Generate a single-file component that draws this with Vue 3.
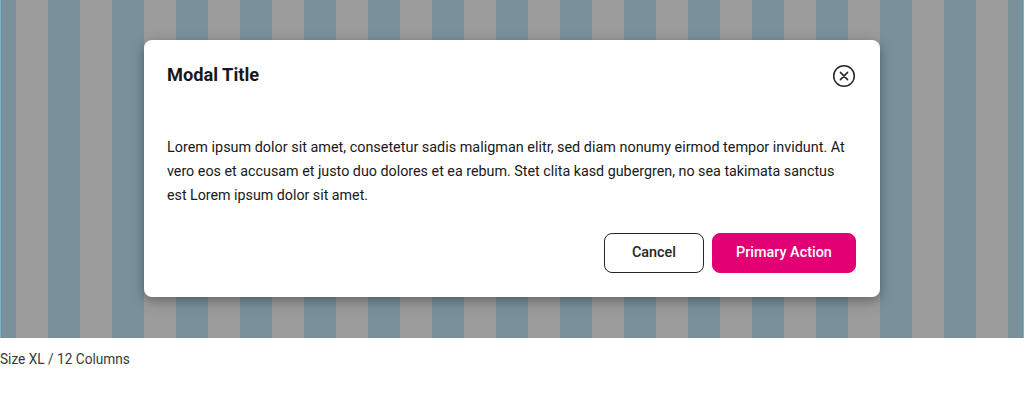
<script setup>
const lines = [
  'Lorem ipsum dolor sit amet, consetetur sadis maligman elitr, sed diam nonumy eirmod tempor invidunt. At',
  'vero eos et accusam et justo duo dolores et ea rebum. Stet clita kasd gubergren, no sea takimata sanctus',
  'est Lorem ipsum dolor sit amet.',
]
</script>

<template>
  <main class="page">
    <section class="stage">
      <div class="modal" role="dialog" aria-labelledby="modal-title">
        <header class="header">
          <h1 id="modal-title" class="title">Modal Title</h1>
          <button class="close" aria-label="Close">
            <svg width="24" height="24" viewBox="0 0 24 24" fill="none" stroke="#262626" stroke-width="1.5" stroke-linecap="round">
              <circle cx="12" cy="12" r="10.3" />
              <path d="M8.4 8.4l7.2 7.2M15.6 8.4l-7.2 7.2" />
            </svg>
          </button>
        </header>
        <p class="copy">
          <span v-for="(line, i) in lines" :key="i" class="line" :class="'line-' + (i + 1)">{{ line }}</span>
        </p>
        <footer class="actions">
          <button class="btn secondary"><span class="label">Cancel</span></button>
          <button class="btn primary"><span class="label">Primary Action</span></button>
        </footer>
      </div>
    </section>
    <p class="caption">Size XL / 12 Columns</p>
  </main>
</template>

<style scoped>
.page {
  height: 404px;
  overflow: hidden;
  background: #fff;
  font-family: Roboto, "Liberation Sans", sans-serif;
  color: #191919;
}
.stage {
  box-sizing: border-box;
  height: 338px;
  padding: 40px 143px 0;
  border: solid #74b3c8;
  border-width: 0 1px;
  background: repeating-linear-gradient(90deg, #7a919b 0 32px, #9b9b9b 32px 64px) -17px 0 / 1088px 100%;
}
.modal {
  box-sizing: border-box;
  height: 257px;
  padding: 24px 24px 24px 23px;
  border-radius: 8px;
  background: #fff;
  box-shadow: 0 4px 16px rgba(0, 0, 0, 0.2), 0 4px 8px rgba(0, 0, 0, 0.16);
}
.header {
  display: flex;
  justify-content: space-between;
  height: 71px;
}
.title {
  margin: 0;
  font-size: 18px;
  line-height: 22px;
  font-weight: 700;
  white-space: nowrap;
  transform: scaleX(1.012);
  transform-origin: 0 50%;
}
.close {
  width: 24px;
  height: 24px;
  padding: 0;
  border: 0;
  background: none;
}
.close svg {
  display: block;
}
.copy {
  margin: 0;
  font-size: 15px;
  line-height: 24px;
}
.line {
  display: block;
  width: max-content;
  white-space: nowrap;
  transform-origin: 0 50%;
}
.line-1 {
  transform: scaleX(0.96);
}
.line-2 {
  transform: scaleX(0.953);
}
.line-3 {
  transform: scaleX(0.949);
}
.actions {
  display: flex;
  justify-content: flex-end;
  gap: 8px;
  margin-top: 26px;
}
.btn {
  box-sizing: border-box;
  height: 40px;
  padding: 0 0 2px;
  display: flex;
  align-items: center;
  justify-content: center;
  border: 1px solid #262626;
  border-radius: 8px;
  background: #fff;
  color: #262626;
  font: 500 15px/24px Roboto, "Liberation Sans", sans-serif;
  white-space: nowrap;
}
.label {
  display: block;
  transform: scaleX(0.96);
}
.secondary {
  width: 100px;
}
.primary {
  width: 144px;
  border-color: #e20074;
  background: #e20074;
  color: #fff;
}
.caption {
  margin: 10px 0 0;
  width: max-content;
  font-size: 14.5px;
  line-height: 24px;
  color: #383838;
  transform: scaleX(0.942);
  transform-origin: 0 50%;
}
</style>

<style>
body {
  margin: 0;
  overflow: hidden;
}
</style>
